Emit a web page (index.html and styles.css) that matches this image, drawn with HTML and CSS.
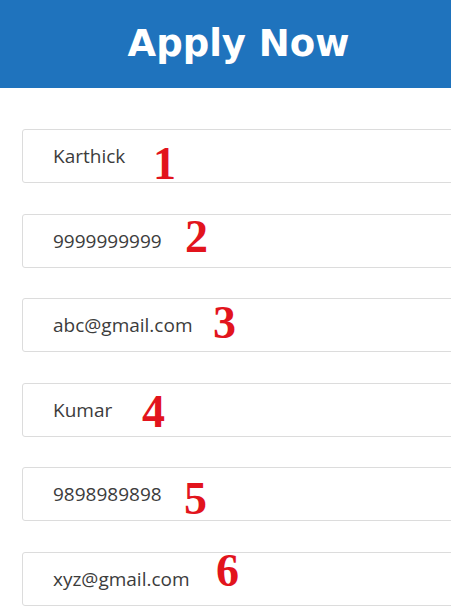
FILE: index.html
```html
<!DOCTYPE html>
<html>
<head>
<meta charset="utf-8">
<link rel="stylesheet" href="styles.css">
</head>
<body>
<header class="banner"><h1 class="title">Apply Now</h1></header>
<main class="form">
  <div class="field"><span class="value">Karthick</span><span class="num n1">1</span></div>
  <div class="field"><span class="value">9999999999</span><span class="num n2">2</span></div>
  <div class="field"><span class="value">abc@gmail.com</span><span class="num n3">3</span></div>
  <div class="field"><span class="value">Kumar</span><span class="num n4">4</span></div>
  <div class="field"><span class="value">9898989898</span><span class="num n5">5</span></div>
  <div class="field"><span class="value">xyz@gmail.com</span><span class="num n6">6</span></div>
</main>
</body>
</html>
```
FILE: styles.css
```css
html, body {
  margin: 0;
  padding: 0;
  background: #fff;
  overflow: hidden;
}
.banner {
  height: 88px;
  background: #1f73bd;
  display: flex;
  align-items: center;
  justify-content: center;
  padding-left: 26px;
  box-sizing: border-box;
}
.title {
  margin: 0;
  color: #fff;
  font-family: "DejaVu Sans", sans-serif;
  font-weight: 700;
  font-size: 37px;
  line-height: 1;
  padding-bottom: 2px;
}
.form {
  padding: 41px 0 0 22px;
  display: flex;
  flex-direction: column;
  gap: 30.6px;
}
.field {
  position: relative;
  width: 460px;
  height: 54px;
  box-sizing: border-box;
  border: 1px solid #dcdcdc;
  border-radius: 3px;
  display: flex;
  align-items: center;
  padding-left: 30px;
}
.value {
  font-family: "Open Sans", sans-serif;
  font-size: 19px;
  color: #3c3c3c;
}
.num {
  position: absolute;
  font-family: "Liberation Serif", serif;
  font-weight: 700;
  font-size: 46px;
  line-height: 1;
  color: #e2141d;
}
.n1 { left: 130px; top: 11px; }
.n2 { left: 162px; top: -1px; }
.n3 { left: 190px; top: 1px; }
.n4 { left: 119px; top: 5px; }
.n5 { left: 161px; top: 8px; }
.n6 { left: 193px; top: -5px; }
```
